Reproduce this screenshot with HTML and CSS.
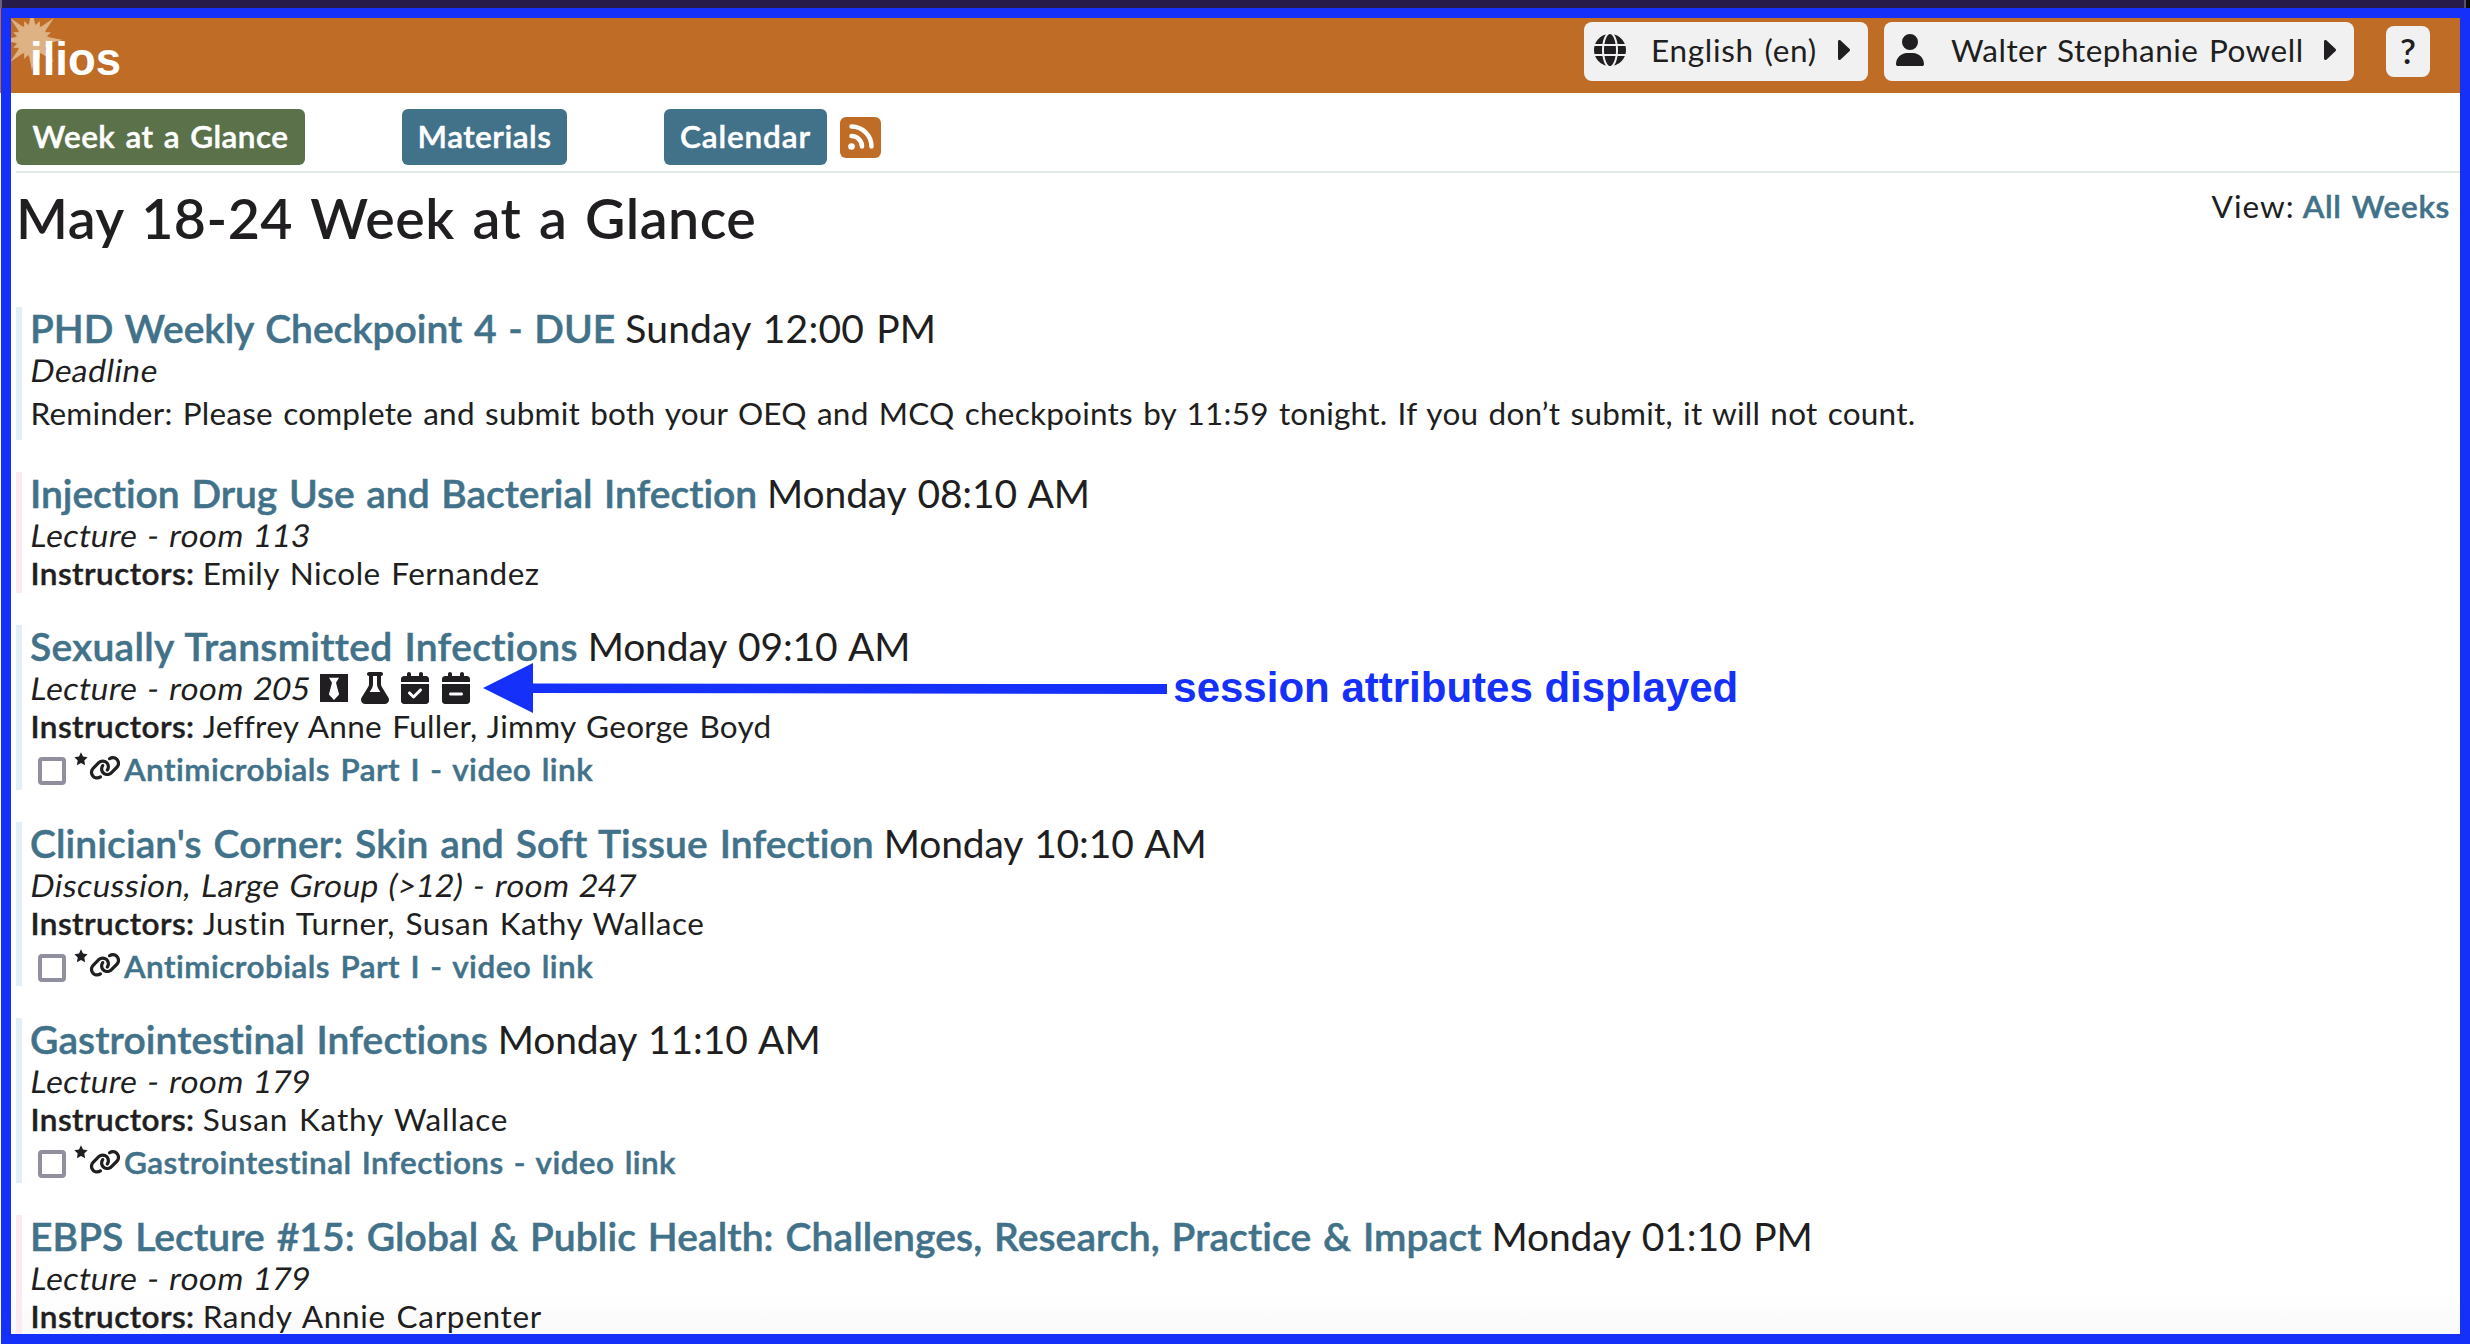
FILE: index.html
```
<!DOCTYPE html>
<html lang="en">
<head>
<meta charset="utf-8">
<title>Ilios - Week at a Glance</title>
<link rel="stylesheet" href="styles.css">
</head>
<body>
<svg class="defs" aria-hidden="true">
  <symbol id="globe" viewBox="0 0 512 512"><path d="M352 256c0 22.2-1.2 43.6-3.3 64H163.3c-2.2-20.4-3.3-41.8-3.3-64s1.2-43.6 3.3-64H348.7c2.2 20.4 3.3 41.8 3.3 64zm28.8-64H503.9c5.3 20.5 8.1 41.9 8.1 64s-2.8 43.5-8.1 64H380.8c2.1-20.6 3.2-42 3.2-64s-1.1-43.4-3.2-64zm112.6-32H376.7c-10-63.9-29.8-117.4-55.3-151.6c78.3 20.7 142 77.5 171.9 151.6zm-149.1 0H167.7c6.1-36.4 15.5-68.6 27-94.7c10.5-23.6 22.2-40.7 33.5-51.5C239.4 3.2 248.7 0 256 0s16.6 3.2 27.8 13.8c11.3 10.8 23 27.9 33.5 51.5c11.6 26 20.9 58.2 27 94.7zm-209 0H18.6C48.6 85.9 112.2 29.1 190.6 8.4C165.1 42.6 145.3 96.1 135.3 160zM8.1 192H131.2c-2.1 20.6-3.2 42-3.2 64s1.1 43.4 3.2 64H8.1C2.8 299.5 0 278.1 0 256s2.8-43.5 8.1-64zM194.7 446.6c-11.6-26-20.9-58.2-27-94.6H344.3c-6.1 36.4-15.5 68.6-27 94.6c-10.5 23.6-22.2 40.7-33.5 51.5C272.6 508.8 263.3 512 256 512s-16.6-3.2-27.8-13.8c-11.3-10.8-23-27.9-33.5-51.5zM135.3 352c10 63.9 29.8 117.4 55.3 151.6C112.2 482.9 48.6 426.1 18.6 352H135.3zm358.1 0c-30 74.1-93.6 130.9-171.9 151.6c25.5-34.2 45.2-87.7 55.3-151.6H493.4z"/></symbol>
  <symbol id="user" viewBox="0 0 448 512"><path d="M224 256A128 128 0 1 0 224 0a128 128 0 1 0 0 256zm-45.7 48C79.8 304 0 383.8 0 482.3C0 498.7 13.3 512 29.7 512H418.3c16.4 0 29.7-13.3 29.7-29.7C448 383.8 368.2 304 269.7 304H178.3z"/></symbol>
  <symbol id="caret" viewBox="0 0 12 20"><path d="M0 1.6C0 .2 1.6-.4 2.6.6l8.8 8.2c.8.7.8 1.7 0 2.4l-8.8 8.2c-1 1-2.6.4-2.6-1z"/></symbol>
  <symbol id="tie" viewBox="0 0 448 512"><path fill-rule="evenodd" d="M0 32v448h448V32H0zM144 92h160L256 170 306 360 224 448 142 360 192 170z"/></symbol>
  <symbol id="flask" viewBox="0 0 448 512"><path d="M288 0H160 128C110.3 0 96 14.3 96 32s14.3 32 32 32V196.8c0 11.8-3.3 23.5-9.5 33.5L10.3 406.2C3.6 417.2 0 429.7 0 442.6C0 480.9 31.1 512 69.4 512H378.6c38.3 0 69.4-31.1 69.4-69.4c0-12.8-3.6-25.4-10.3-36.4L329.5 230.4c-6.2-10.1-9.5-21.7-9.5-33.5V64c17.7 0 32-14.3 32-32s-14.3-32-32-32H288zM192 196.8V64h64V196.8c0 23.7 6.6 46.9 19 67.1L309.5 320h-171L173 263.9c12.4-20.2 19-43.4 19-67.1z"/></symbol>
  <symbol id="cal-check" viewBox="0 0 448 512"><path d="M128 0c17.7 0 32 14.3 32 32V64H288V32c0-17.7 14.3-32 32-32s32 14.3 32 32V64h48c26.5 0 48 21.5 48 48v48H0V112C0 85.5 21.5 64 48 64H96V32c0-17.7 14.3-32 32-32zM0 192H448V464c0 26.5-21.5 48-48 48H48c-26.5 0-48-21.5-48-48V192zM329 305c9.4-9.4 9.4-24.6 0-33.9s-24.6-9.4-33.9 0l-95 95-47-47c-9.4-9.4-24.6-9.4-33.9 0s-9.4 24.6 0 33.9l64 64c9.4 9.4 24.6 9.4 33.9 0L329 305z"/></symbol>
  <symbol id="cal-minus" viewBox="0 0 448 512"><path d="M128 0c17.7 0 32 14.3 32 32V64H288V32c0-17.7 14.3-32 32-32s32 14.3 32 32V64h48c26.5 0 48 21.5 48 48v48H0V112C0 85.5 21.5 64 48 64H96V32c0-17.7 14.3-32 32-32zM0 192H448V464c0 26.5-21.5 48-48 48H48c-26.5 0-48-21.5-48-48V192zM312 376c13.3 0 24-10.7 24-24s-10.7-24-24-24H136c-13.3 0-24 10.7-24 24s10.7 24 24 24H312z"/></symbol>
  <symbol id="star" viewBox="0 0 14 14"><path d="M7 .3l2 4.2 4.6.7-3.3 3.3.8 4.7L7 11 2.9 13.2l.8-4.7L.4 5.2 5 4.5z"/></symbol>
  <symbol id="link" viewBox="0 0 640 512"><path d="M579.8 267.7c56.5-56.5 56.5-148 0-204.5c-50-50-128.8-56.5-186.3-15.4l-1.6 1.1c-14.4 10.3-17.7 30.3-7.4 44.6s30.3 17.7 44.6 7.4l1.6-1.1c32.1-22.9 76-19.3 103.8 8.6c31.5 31.5 31.5 82.5 0 114L422.3 334.8c-31.5 31.5-82.5 31.5-114 0c-27.9-27.9-31.5-71.8-8.6-103.8l1.1-1.6c10.3-14.4 6.9-34.4-7.4-44.6s-34.4-6.9-44.6 7.4l-1.1 1.6C206.5 251.2 213 330 263 380c56.5 56.5 148 56.5 204.5 0L579.8 267.7zM60.2 244.3c-56.5 56.5-56.5 148 0 204.5c50 50 128.8 56.5 186.3 15.4l1.6-1.1c14.4-10.3 17.7-30.3 7.4-44.6s-30.3-17.7-44.6-7.4l-1.6 1.1c-32.1 22.9-76 19.3-103.8-8.6C74 372 74 321 105.5 289.5L217.7 177.2c31.5-31.5 82.5-31.5 114 0c27.9 27.9 31.5 71.8 8.6 103.9l-1.1 1.6c-10.3 14.4-6.9 34.4 7.4 44.6s34.4 6.9 44.6-7.4l1.1-1.6C433.5 260.8 427 182 377 132c-56.5-56.5-148-56.5-204.5 0L60.2 244.3z"/></symbol>
</svg>

<div class="page">
  <div class="window-strip"></div>

  <header class="header">
    <div class="logo">
      <svg class="sun" viewBox="-40 -40 80 80">
        <circle r="13.5"/>
        <g id="rays4">
          <path d="M11-4L31 0 11 4z"/><path d="M11-4L31 0 11 4z" transform="rotate(45)"/>
          <path d="M11-4L20.500 0 11 4z" transform="rotate(22.5)"/><path d="M11-4L20.500 0 11 4z" transform="rotate(67.500)"/>
          <path d="M12-2L17 0 12 2z" transform="rotate(11)"/><path d="M12-2L17 0 12 2z" transform="rotate(34)"/>
          <path d="M12-2L17 0 12 2z" transform="rotate(56)"/><path d="M12-2L17 0 12 2z" transform="rotate(79)"/>
        </g>
        <use href="#rays4" transform="rotate(90)"/><use href="#rays4" transform="rotate(180)"/><use href="#rays4" transform="rotate(270)"/>
      </svg>
      <span class="logo-text">ilios</span>
    </div>
    <button class="tool lang"><svg class="i-globe"><use href="#globe"/></svg><span class="ls7">English (en)</span><svg class="i-caret"><use href="#caret"/></svg></button>
    <button class="tool account"><svg class="i-user"><use href="#user"/></svg><span class="ls5">Walter Stephanie Powell</span><svg class="i-caret"><use href="#caret"/></svg></button>
    <button class="tool help">?</button>
  </header>

  <nav class="nav">
    <a class="tab active ls4">Week at a Glance</a>
    <a class="tab materials ls5">Materials</a>
    <a class="tab calendar ls8">Calendar</a>
    <svg class="rss" viewBox="0 0 41 41"><rect width="41" height="41" rx="6"/><circle cx="11.500" cy="29.500" r="3.300"/><path d="M11.500 19a10.500 10.500 0 0 1 10.500 10.500M11.500 9.500a20 20 0 0 1 20 20"/></svg>
  </nav>

  <main class="main">
    <div class="heading">
      <h1 class="ls5">May 18-24 Week at a Glance</h1>
      <div class="view"><span class="ls10">View:</span> <a class="ls7">All Weeks</a></div>
    </div>

    <div class="events">
      <article class="event blue short">
        <h2><a class="ls0">PHD Weekly Checkpoint 4 - DUE</a> <span class="time ls2">Sunday 12:00 PM</span></h2>
        <div class="row"><span class="kind">Deadline</span></div>
        <div class="row extra ls2">Reminder: Please complete and submit both your OEQ and MCQ checkpoints by 11:59 tonight. If you don’t submit, it will not count.</div>
      </article>
      <article class="event pink">
        <h2><a class="ls0">Injection Drug Use and Bacterial Infection</a> <span class="time">Monday 08:10 AM</span></h2>
        <div class="row"><span class="kind">Lecture - room 113</span></div>
        <div class="row"><b>Instructors:</b> <span class="who ls5">Emily Nicole Fernandez</span></div>
      </article>
      <article class="event blue">
        <h2><a class="ls3">Sexually Transmitted Infections</a> <span class="time">Monday 09:10 AM</span></h2>
        <div class="row attrs"><span class="kind">Lecture - room 205</span>
          <svg><use href="#tie"/></svg><svg><use href="#flask"/></svg><svg><use href="#cal-check"/></svg><svg><use href="#cal-minus"/></svg>
          <svg class="arrow" viewBox="0 0 686 50"><path d="M0 25L50 0v20.500L684 21v10L50 30v20z"/></svg>
          <span class="note">session attributes displayed</span>
        </div>
        <div class="row"><b>Instructors:</b> <span class="who ls3">Jeffrey Anne Fuller, Jimmy George Boyd</span></div>
        <div class="row extra material"><i class="box"></i><svg class="i-star"><use href="#star"/></svg><svg class="i-link"><use href="#link"/></svg><a class="ls5">Antimicrobials Part I - video link</a></div>
      </article>
      <article class="event blue">
        <h2><a class="ls1">Clinician's Corner: Skin and Soft Tissue Infection</a> <span class="time">Monday 10:10 AM</span></h2>
        <div class="row"><span class="kind">Discussion, Large Group (&gt;12) - room 247</span></div>
        <div class="row"><b>Instructors:</b> <span class="who ls5">Justin Turner, Susan Kathy Wallace</span></div>
        <div class="row extra material"><i class="box"></i><svg class="i-star"><use href="#star"/></svg><svg class="i-link"><use href="#link"/></svg><a class="ls5">Antimicrobials Part I - video link</a></div>
      </article>
      <article class="event blue">
        <h2><a class="ls1">Gastrointestinal Infections</a> <span class="time">Monday 11:10 AM</span></h2>
        <div class="row"><span class="kind">Lecture - room 179</span></div>
        <div class="row"><b>Instructors:</b> <span class="who ls8">Susan Kathy Wallace</span></div>
        <div class="row extra material"><i class="box"></i><svg class="i-star"><use href="#star"/></svg><svg class="i-link"><use href="#link"/></svg><a class="ls4">Gastrointestinal Infections - video link</a></div>
      </article>
      <article class="event pink">
        <h2><a class="ls1">EBPS Lecture #15: Global &amp; Public Health: Challenges, Research, Practice &amp; Impact</a> <span class="time">Monday 01:10 PM</span></h2>
        <div class="row"><span class="kind">Lecture - room 179</span></div>
        <div class="row"><b>Instructors:</b> <span class="who ls7">Randy Annie Carpenter</span></div>
      </article>
    </div>
  </main>
  <div class="frame"></div>
</div>
</body>
</html>
```
FILE: styles.css
```
* { box-sizing: border-box; }
body { margin: 0; background: #fff; }
.defs { display: none; }

.page {
  position: relative;
  height: 1344px;
  overflow: hidden;
  font-family: Lato, sans-serif;
  font-size: 31.5px;
  line-height: 38px;
  word-spacing: 2px;
  color: #201e20;
  display: flex;
  flex-direction: column;
}
.frame {
  position: absolute;
  inset: 8px 0 0 1px;
  border: 10px solid #1430f9;
}
.window-strip {
  flex: none;
  height: 8px;
  background: linear-gradient(90deg, #6a5f7c 2px, #271b4a 2px, #271b4a 2464px, #5b5070 2464px, #5b5070 2466px, #0a0a0c 2466px);
}

.ls0 { letter-spacing: -.03px; }
.ls1 { letter-spacing: .1px; }
.ls2 { letter-spacing: .22px; }
.ls3 { letter-spacing: .29px; }
.ls4 { letter-spacing: .43px; }
.ls5 { letter-spacing: .49px; }
.ls6 { letter-spacing: .6px; }
.ls7 { letter-spacing: .7px; }
.ls8 { letter-spacing: .85px; }
.ls10 { letter-spacing: 1px; }

.header {
  flex: none;
  height: 85px;
  padding: 14px 40px 0 0;
  display: flex;
  align-items: flex-start;
  background: #be6c26;
}
.logo {
  position: relative;
  margin-right: auto;
  padding-left: 30px;
}
.sun {
  position: absolute;
  left: -8px;
  top: -22px;
  width: 80px;
  height: 80px;
  fill: #deb283;
}
.logo-text {
  position: relative;
  display: block;
  margin-top: 13px;
  font: bold 45.500px/50px "Liberation Sans", sans-serif;
  color: #fff;
}
.tool {
  display: flex;
  align-items: center;
  height: 59px;
  border: 0;
  border-radius: 8px;
  padding: 0 18px 3px 10px;
  background: #f1f1f1;
  font: inherit;
  word-spacing: inherit;
  color: inherit;
}
.tool svg { flex: none; fill: #201e20; }
.lang { width: 284px; margin-right: 16px; }
.account { width: 470px; margin-right: 32px; padding-left: 12px; }
.help {
  width: 44px;
  height: 51px;
  margin-top: 4px;
  padding: 0 0 3px;
  justify-content: center;
  font-size: 35px;
  font-weight: 600;
}
.i-globe { width: 32px; height: 32px; margin-right: 25px; }
.i-user { width: 28px; height: 32px; margin-right: 27px; }
.i-caret { width: 12px; height: 20px; margin-left: auto; }

.nav {
  flex: none;
  height: 80px;
  margin-left: 16px;
  padding-top: 16px;
  display: flex;
  align-items: flex-start;
  border-bottom: 2px solid #e5ebe9;
}
.tab {
  height: 56px;
  padding-bottom: 2px;
  border-radius: 6px;
  display: flex;
  align-items: center;
  justify-content: center;
  background: #417289;
  color: #fff;
  font-weight: 600;
  -webkit-text-stroke: .5px currentColor;
}
.active { width: 289px; background: #5a714a; }
.materials { width: 165px; margin-left: 97px; }
.calendar { width: 163px; margin-left: 97px; }
.rss { width: 41px; height: 41px; margin: 8px 0 0 13px; fill: #be6c26; }
.rss circle { fill: #fff; }
.rss path { fill: none; stroke: #fff; stroke-width: 4.5; stroke-linecap: round; }

.main {
  flex: 1;
  padding-left: 16px;
  background: linear-gradient(#fff 1120px, #f8f8f8 1165px);
}
.heading {
  height: 134px;
  padding-right: 20px;
  display: flex;
  justify-content: space-between;
}
h1 {
  margin: 11px 0 0 0;
  font-size: 55.5px;
  line-height: 68px;
  font-weight: 600;
  word-spacing: 3.4px;
}
.view { padding-top: 14px; }
.view a { margin-left: -2px; }
.view a, .event a {
  color: #417289;
  font-weight: 600;
  -webkit-text-stroke: .5px currentColor;
}

.events { display: flex; flex-direction: column; gap: 32px; }
.event { border-left: 6px solid #e2f0f6; padding: 1px 0 1.67px 8px; white-space: nowrap; }
.short { padding-bottom: 8px; }
.pink { border-color: #fbeaf0; padding-bottom: 1px; }
.event h2 {
  margin: 0 0 2px;
  font-size: 39px;
  line-height: 41px;
  font-weight: 400;
}
.time { margin-left: -2px; letter-spacing: -.15px; }
.time.ls2 { letter-spacing: .2px; }
.row { height: 38px; padding-left: .5px; }
.row b { font-weight: 600; letter-spacing: .43px; -webkit-text-stroke: .4px currentColor; }
.who { margin-left: -2px; }
.extra { margin-top: 5px; }
.kind {
  display: inline-block;
  transform: skewX(-9deg);
  letter-spacing: .55px;
  word-spacing: 1.2px;
}
.attrs { position: relative; display: flex; align-items: center; gap: 12.7px; }
.attrs > svg { flex: none; width: 28px; height: 32px; fill: #201e20; }
.attrs > .kind { margin-right: -3px; }
.attrs > .arrow { width: 686px; height: 50px; margin-left: 0; fill: #1430f9; }
.attrs > .note {
  font: bold 42px/46px "Liberation Sans", sans-serif;
  word-spacing: 0;
  color: #1430f9;
  margin-left: -8px;
}
.material { display: flex; align-items: center; padding-left: 8px; }
.box { width: 28px; height: 28px; border: 4px solid #8f8f9d; border-radius: 4px; margin: 4px 8px 0 0; }
.i-star { width: 14px; height: 14px; margin: 0 1px 20px 0; fill: #201e20; }
.i-link { width: 32px; height: 25.600px; margin: 0 3px 2px 0; fill: #201e20; }
```
